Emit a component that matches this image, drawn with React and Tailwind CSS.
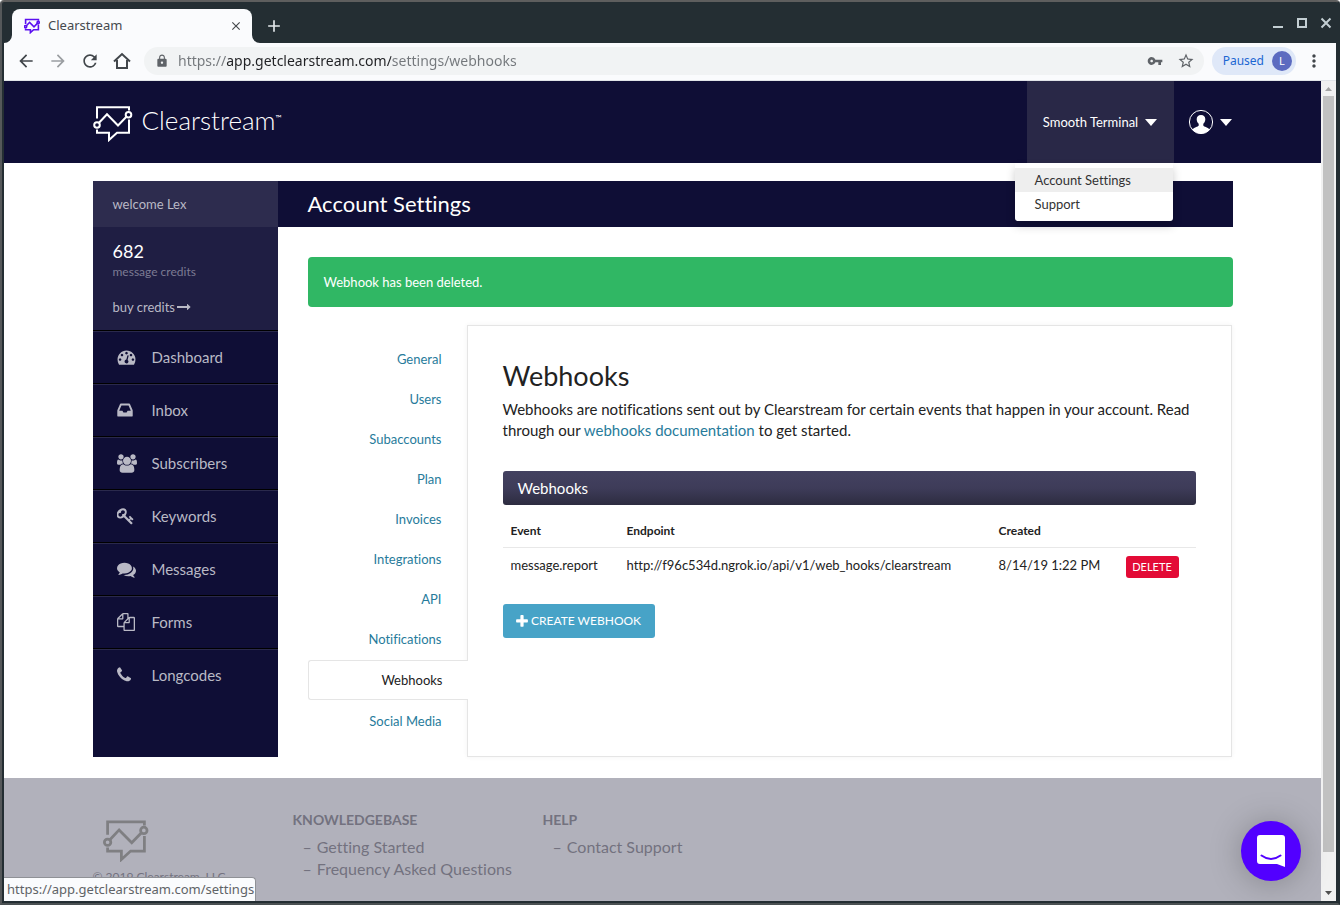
import React from "react";
import {
  MdArrowBack,
  MdArrowForward,
  MdRefresh,
  MdLock,
  MdVpnKey,
  MdStarBorder,
  MdMoreVert,
  MdClose,
  MdAdd,
} from "react-icons/md";

const ICONS = {
  dashboard: {
    box: "0 0 1792 1792",
    d: "M384 1152q0-53-37.5-90.5t-90.5-37.5-90.5 37.5-37.5 90.5 37.5 90.5 90.5 37.5 90.5-37.5 37.5-90.5zm192-448q0-53-37.5-90.5t-90.5-37.5-90.5 37.5-37.5 90.5 37.5 90.5 90.5 37.5 90.5-37.5 37.5-90.5zm428 481l101-382q6-26-7.5-48.5t-38.5-29.5-48 6.5-30 39.5l-101 382q-60 5-107 43.5t-63 98.5q-20 77 20 146t117 89 146-20 89-117q16-60-6-117t-72-91zm660-33q0-53-37.5-90.5t-90.5-37.5-90.5 37.5-37.5 90.5 37.5 90.5 90.5 37.5 90.5-37.5 37.5-90.5zm-640-640q0-53-37.5-90.5t-90.5-37.5-90.5 37.5-37.5 90.5 37.5 90.5 90.5 37.5 90.5-37.5 37.5-90.5zm448 192q0-53-37.5-90.5t-90.5-37.5-90.5 37.5-37.5 90.5 37.5 90.5 90.5 37.5 90.5-37.5 37.5-90.5zm320 448q0 261-141 483-19 29-54 29h-1402q-35 0-54-29-141-221-141-483 0-182 71-348t191-286 286-191 348-71 348 71 286 191 191 286 71 348z",
  },
  inbox: {
    box: "128 0 1536 1792",
    d: "M1151 960h316q-1-3-2.5-8.5t-2.5-7.5l-212-496h-708l-212 496q-1 3-2.5 8.5t-2.5 7.5h316l95 192h320zm513 30v482q0 26-19 45t-45 19h-1408q-26 0-45-19t-19-45v-482q0-62 25-123l238-552q10-25 36.5-42t52.5-17h832q26 0 52.5 17t36.5 42l238 552q25 61 25 123z",
  },
  users: {
    box: "0 0 1920 1792",
    d: "M593 896q-162 5-265 128h-134q-82 0-138-40.5t-56-118.5q0-353 124-353 6 0 43.5 21t97.5 42.5 119 21.5q67 0 133-23-5 37-5 66 0 139 81 256zm1071 637q0 120-73 189.5t-194 69.5h-874q-121 0-194-69.5t-73-189.5q0-53 3.5-103.5t14-109 26.5-108.5 43-97.5 62-81 85.5-53.5 111.5-20q10 0 43 21.5t73 48 107 48 135 21.5 135-21.5 107-48 73-48 43-21.5q61 0 111.5 20t85.5 53.5 62 81 43 97.5 26.5 108.5 14 109 3.5 103.5zm-1024-1277q0 106-75 181t-181 75-181-75-75-181 75-181 181-75 181 75 75 181zm704 384q0 159-112.5 271.5t-271.5 112.5-271.5-112.5-112.5-271.5 112.5-271.5 271.5-112.5 271.5 112.5 112.5 271.5zm576 225q0 78-56 118.5t-138 40.5h-134q-103-123-265-128 81-117 81-256 0-29-5-66 66 23 133 23 59 0 119-21.5t97.5-42.5 43.5-21q124 0 124 353zm-128-609q0 106-75 181t-181 75-181-75-75-181 75-181 181-75 181 75 75 181z",
  },
  key: {
    box: "64 0 1664 1792",
    d: "M832 512q0-80-56-136t-136-56-136 56-56 136q0 42 19 83-41-19-83-19-80 0-136 56t-56 136 56 136 136 56 136-56 56-136q0-42-19-83 41 19 83 19 80 0 136-56t56-136zm851 704q0 17-49 66t-66 49q-9 0-28.5-16t-36.5-33-38.5-40-24.5-26l-96 96 220 220q28 28 28 68 0 42-39 81t-81 39q-40 0-68-28l-671-671q-176 131-365 131-163 0-265.5-102.5t-102.5-265.5q0-160 95-313t248-248 313-95q163 0 265.5 102.5t102.5 265.5q0 189-131 365l355 355 96-96q-3-3-26-24.5t-40-38.5-33-36.5-16-28.5q0-17 49-66t66-49q13 0 23 10 6 6 46 44.5t82 79.5 86.5 86 73 78 28.5 41z",
  },
  comments: {
    box: "0 0 1792 1792",
    d: "M1408 768q0 139-94 257t-256.5 186.5-353.5 68.5q-86 0-176-16-124 88-278 128-36 9-86 16h-3q-11 0-20.5-8t-11.5-21q-1-3-1-6.5t.5-6.5 2-6l2.5-5 3.5-5.5 4-5 4.5-5 4-4.5q5-6 23-25t26-29.5 22.5-29 25-38.5 20.5-44q-124-72-195-177t-71-224q0-139 94-257t256.5-186.5 353.5-68.5 353.5 68.5 256.5 186.5 94 257zm384 256q0 120-71 224.5t-195 176.5q10 24 20.5 44t25 38.5 22.5 29 26 29.5 23 25q1 1 4 4.5t4.5 5 4 5 3.5 5.5l2.5 5 2 6 .5 6.5-1 6.5q-3 14-13 22t-22 7q-50-7-86-16-154-40-278-128-90 16-176 16-271 0-472-132 58 4 88 4 161 0 309-45t264-129q125-92 192-212t67-254q0-77-23-152 129 71 204 178t75 230z",
  },
  files: {
    box: "0 0 1792 1792",
    d: "M1696 384q40 0 68 28t28 68v1216q0 40-28 68t-68 28h-960q-40 0-68-28t-28-68v-288h-544q-40 0-68-28t-28-68v-672q0-40 20-88t48-76l408-408q28-28 76-48t88-20h416q40 0 68 28t28 68v328q68-40 128-40h416zm-544 213l-299 299h299v-299zm-640-384l-299 299h299v-299zm196 647l316-316v-416h-384v416q0 40-28 68t-68 28h-416v640h512v-256q0-40 20-88t48-76zm956 804v-1152h-384v416q0 40-28 68t-68 28h-416v640h896z",
  },
  phone: {
    box: "192 0 1408 1792",
    d: "M1600 1240q0 27-10 70.5t-21 68.5q-21 50-122 106-94 51-186 51-27 0-53-3.5t-57.5-12.5-47-14.5-55.5-20.5-49-18q-98-35-175-83-127-79-264-216t-216-264q-48-77-83-175-3-9-18-49t-20.5-55.5-14.5-47-12.5-57.5-3.5-53q0-92 51-186 56-101 106-122 25-11 68.5-21t70.5-10q14 0 21 3 18 6 53 76 11 19 30 54t35 63.5 31 53.5q3 4 17.5 25t21.5 35.5 7 28.5q0 20-28.5 50t-62 55-62 53-28.5 46q0 9 5 22.5t8.5 20.5 14 24 11.5 19q76 137 174 235t235 174q2 1 19 11.5t24 14 20.5 8.5 22.5 5q18 0 46-28.5t53-62 55-62 50-28.5q14 0 28.5 7t35.5 21.5 25 17.5q25 15 53.5 31t63.5 35 54 30q70 35 76 53 3 7 3 21z",
  },
  plus: {
    box: "192 0 1408 1792",
    d: "M1600 736v192q0 40-28 68t-68 28h-416v416q0 40-28 68t-68 28h-192q-40 0-68-28t-28-68v-416h-416q-40 0-68-28t-28-68v-192q0-40 28-68t68-28h416v-416q0-40 28-68t68-28h192q40 0 68 28t28 68v416h416q40 0 68 28t28 68z",
  },
  arrow: {
    box: "0 0 1792 1792",
    d: "M1728 893q0 14-10 24l-384 354q-16 14-35 6-19-9-19-29v-224h-1248q-14 0-23-9t-9-23v-192q0-14 9-23t23-9h1248v-224q0-21 19-29t35 5l384 350q10 10 10 23z",
  },
};

function Icon({ name, className }) {
  return (
    <svg viewBox={ICONS[name].box} className={className} fill="currentColor" aria-hidden="true">
      <path d={ICONS[name].d} />
    </svg>
  );
}

function Mark({ className, weight = 2 }) {
  return (
    <svg viewBox="0 0 40 37" className={className} fill="none" stroke="currentColor" strokeWidth={weight} aria-hidden="true">
      <path d="M4 13.5V2.2H36V5.5M36 14.5V27.7H24L16 35V27.7H4V24.5" />
      <path d="M6 17.8L14 9.3L25 20.5L33.4 11.8" />
      <circle cx="4" cy="20" r="2.8" />
      <circle cx="35.5" cy="9.7" r="2.8" />
    </svg>
  );
}

function Caret() {
  return (
    <svg viewBox="0 0 12 7" className="h-[7px] w-3" fill="#fff" aria-hidden="true">
      <path d="M0 0H12L6 7Z" />
    </svg>
  );
}

const NAV = [
  ["dashboard", "Dashboard", "h-[18px] w-[19px]"],
  ["inbox", "Inbox", "h-[18px] w-4"],
  ["users", "Subscribers", "h-[19px] w-5"],
  ["key", "Keywords", "h-[18px] w-[17px]"],
  ["comments", "Messages", "h-[19px] w-[19px]"],
  ["files", "Forms", "h-[18px] w-[18px]"],
  ["phone", "Longcodes", "h-[18px] w-[14px]"],
];

const TABS = [
  "General",
  "Users",
  "Subaccounts",
  "Plan",
  "Invoices",
  "Integrations",
  "API",
  "Notifications",
  "Webhooks",
  "Social Media",
];

function TitleBar() {
  return (
    <div className="flex h-[41px] shrink-0 items-end justify-between pl-[10px]">
      <div className="flex items-center">
        <div className="relative flex h-[34px] w-60 items-center rounded-t-lg bg-[#fafbfd] pr-[9px] pl-3">
          <svg viewBox="0 0 8 8" className="absolute bottom-0 -left-2 size-2" fill="#fafbfd" aria-hidden="true">
            <path d="M8 0V8H0A8 8 0 0 0 8 0Z" />
          </svg>
          <svg viewBox="0 0 8 8" className="absolute -right-2 bottom-0 size-2" fill="#fafbfd" aria-hidden="true">
            <path d="M0 0V8H8A8 8 0 0 1 0 0Z" />
          </svg>
          <Mark className="h-4 w-4 text-[#5b10f0]" weight={4} />
          <span className="ml-2 flex-1 text-[13px] text-[#45494d]">Clearstream</span>
          <button aria-label="Close tab" className="text-[#45494d]">
            <MdClose className="size-[14px]" />
          </button>
        </div>
        <button aria-label="New tab" className="ml-3 text-[#e4e9ec]">
          <MdAdd className="size-5" />
        </button>
      </div>
      <div className="flex h-[41px] items-center gap-3 pr-[6px] text-[#c3ced3]">
        <button aria-label="Minimize">
          <svg viewBox="0 0 12 12" className="size-3" aria-hidden="true">
            <path d="M1 10H11" stroke="currentColor" strokeWidth="2" />
          </svg>
        </button>
        <button aria-label="Maximize">
          <svg viewBox="0 0 12 12" className="size-3" aria-hidden="true">
            <rect x="2" y="2" width="8" height="8" fill="none" stroke="currentColor" strokeWidth="2" />
          </svg>
        </button>
        <button aria-label="Close window">
          <svg viewBox="0 0 12 12" className="size-3" aria-hidden="true">
            <path d="M1.5 1.5L10.5 10.5M10.5 1.5L1.5 10.5" stroke="currentColor" strokeWidth="2" />
          </svg>
        </button>
      </div>
    </div>
  );
}

function Toolbar() {
  return (
    <div className="flex h-[38px] shrink-0 items-center border-b border-[#e1e4e8] bg-[#fafbfd] px-3 pb-px text-[#41464b]">
      <div className="flex gap-3">
        <button aria-label="Back"><MdArrowBack className="size-5" /></button>
        <button aria-label="Forward" className="text-[#9b9ea2]"><MdArrowForward className="size-5" /></button>
        <button aria-label="Reload"><MdRefresh className="size-5" /></button>
        <button aria-label="Home">
          <svg viewBox="0 0 20 20" className="size-5" fill="none" stroke="currentColor" strokeWidth="2" aria-hidden="true">
            <path d="M2 10.5L10 3L18 10.5M5 9V17H15V9" />
          </svg>
        </button>
      </div>
      <div className="ml-3 flex h-7 flex-1 items-center rounded-full bg-[#f1f3f4] pr-[9px] pl-[11px] text-[#5f6368]">
        <MdLock className="size-[14px] shrink-0" />
        <input
          aria-label="Address"
          readOnly
          value="https://app.getclearstream.com/settings/webhooks"
          className="ml-[9px] min-w-0 flex-1 bg-[linear-gradient(90deg,#73777b_48px,#202124_48px,#202124_213px,#73777b_213px)] bg-clip-text text-sm text-transparent outline-none"
        />
        <button aria-label="Saved passwords" className="mr-[14px]"><MdVpnKey className="size-4" /></button>
        <button aria-label="Bookmark"><MdStarBorder className="size-[18px]" /></button>
      </div>
      <button className="ml-2 flex h-7 items-center gap-2 rounded-full bg-[#dfe8f8] pr-1 pl-[11px] text-[12px] text-[#1b66d2]">
        Paused
        <span className="flex size-5 items-center justify-center rounded-full bg-[#5c6bc0] text-[11px] text-white">L</span>
      </button>
      <button aria-label="Menu" className="ml-2"><MdMoreVert className="size-5" /></button>
    </div>
  );
}

function Header() {
  return (
    <header className="bg-[#0f0e36]">
      <div className="mx-auto flex h-[82px] max-w-[1140px] items-center justify-between">
        <a href="#home" className="flex items-center text-white">
          <Mark className="mt-[2px] h-[37px] w-10" />
          <span className="mb-1 ml-[9px] text-[26px] leading-8 font-light">Clearstream</span>
          <span className="mb-2 text-[8px]">™</span>
        </a>
        <div className="flex h-full">
          <div className="relative">
            <button className="flex h-full w-[147px] items-center justify-center gap-[7px] bg-[#292847] pt-px text-[13px] text-white">
              Smooth Terminal <Caret />
            </button>
            <div className="absolute top-full right-px z-10 w-[158px] rounded-b-[3px] bg-white pt-[5px] pb-[5px] text-[13px] leading-6 text-[#333] shadow-[0_5px_10px_rgba(0,0,0,0.2)]">
              <a href="#settings" className="block bg-[#eee] px-5">Account Settings</a>
              <a href="#support" className="block px-5">Support</a>
            </div>
          </div>
          <button aria-label="Profile" className="mr-px flex items-center gap-[6px] pl-[14px]">
            <svg viewBox="0 0 26 26" className="size-[26px]" aria-hidden="true">
              <clipPath id="face"><circle cx="13" cy="13" r="11.5" /></clipPath>
              <circle cx="13" cy="13" r="11.6" fill="none" stroke="#fff" strokeWidth="1" />
              <path
                clipPath="url(#face)"
                fill="#fff"
                d="M13 6c-3 0-4.500 2-4.300 4.600.1 1.800.9 3.300 2 4.200v1.800c-.5 1.300-5 2-7 4.400V26h18.600v-5c-2-2.400-6.500-3.100-7-4.400v-1.800c1.100-.9 1.900-2.400 2-4.200.2-2.600-1.300-4.600-4.300-4.600z"
              />
            </svg>
            <Caret />
          </button>
        </div>
      </div>
    </header>
  );
}

function Sidebar() {
  return (
    <aside className="flex w-[185px] shrink-0 flex-col bg-[#0f0e36] text-[#b9b9c5]">
      <div className="flex h-[46px] items-center bg-[#2d2c4e] px-5 pt-px text-[13px]">welcome Lex</div>
      <div className="h-[103px] bg-[#1f1e43] px-5 pt-3">
        <div className="text-[18px] leading-6 text-white">682</div>
        <div className="text-[12px] leading-[18px] text-[#7c7b93]">message credits</div>
        <a href="#buy" className="mt-[17px] flex items-center gap-[2px] text-[13px] leading-[18px]">
          buy credits <Icon name="arrow" className="size-[14px]" />
        </a>
      </div>
      <nav>
        {NAV.map(([icon, label, size]) => (
          <a
            key={label}
            href={"#" + icon}
            className="flex h-[53px] items-center border-t border-black pl-6 text-[15px] shadow-[inset_0_1px_0_#2a294c]"
          >
            <span className="flex w-[35px]"><Icon name={icon} className={size} /></span>
            {label}
          </a>
        ))}
      </nav>
    </aside>
  );
}

function Main() {
  return (
    <main className="flex min-w-0 flex-1 flex-col">
      <h1 className="flex h-[46px] items-center bg-[#0f0e36] pb-px pl-[30px] text-[22px] leading-[30px] text-white">Account Settings</h1>
      <div className="mt-[30px] ml-[30px] flex h-[50px] items-center rounded bg-[#30b764] px-4 pt-px text-[13px] text-white">
        Webhook has been deleted.
      </div>
      <div className="mt-[18px] ml-[30px] flex flex-1">
        <nav className="z-[1] -mr-px flex w-40 flex-col pt-[14px] text-right text-[13px] leading-[38px] text-[#277b9b]">
          {TABS.map((tab) =>
            tab === "Webhooks" ? (
              <a
                key={tab}
                href="#webhooks"
                className="my-px h-10 rounded-l-[3px] border border-r-0 border-[#e5e5e5] bg-white pr-[25px] text-[#222]"
              >
                {tab}
              </a>
            ) : (
              <a key={tab} href={"#" + tab} className="h-10 py-px pr-[26px]">
                {tab}
              </a>
            )
          )}
        </nav>
        <section className="mr-px min-h-[432px] flex-1 border border-[#e5e5e5] bg-white px-[35px] pt-8 text-[#222] shadow-[0_0_5px_rgba(0,0,0,0.05)]">
          <h2 className="text-[27px] leading-9">Webhooks</h2>
          <p className="mt-[5px] text-[15px] leading-[21px]">
            Webhooks are notifications sent out by Clearstream for certain events that happen in your account. Read
            through our <a href="#docs" className="text-[#277b9b]">webhooks documentation</a> to get started.
          </p>
          <h3 className="mt-[30px] flex h-[34px] items-center rounded-[3px] bg-linear-to-b from-[#434160] via-[#3e3c59] to-[#2d2c40] px-[15px] text-[15px] text-white">
            Webhooks
          </h3>
          <table className="mt-[10px] w-full table-fixed text-left text-[13px] leading-[18px]">
            <thead className="text-[12px] leading-4">
              <tr>
                <th className="w-[116px] p-2">Event</th>
                <th className="p-2">Endpoint</th>
                <th className="w-[127px] p-2">Created</th>
                <th className="w-[78px] p-2" aria-label="Actions"></th>
              </tr>
            </thead>
            <tbody>
              <tr className="border-t border-[#e8e8e8] align-top">
                <td className="p-2">message.report</td>
                <td className="p-2">http://f96c534d.ngrok.io/api/v1/web_hooks/clearstream</td>
                <td className="p-2">8/14/19 1:22 PM</td>
                <td className="p-2">
                  <button className="block h-[22px] w-[53px] rounded-[3px] bg-[#e30b36] text-[11px] text-white">DELETE</button>
                </td>
              </tr>
            </tbody>
          </table>
          <button className="mt-[18px] flex h-[34px] w-[152px] items-center justify-center gap-[3px] rounded-[3px] bg-[#47a3c7] text-[12px] text-white">
            <Icon name="plus" className="h-[15px] w-3" /> CREATE WEBHOOK
          </button>
        </section>
      </div>
    </main>
  );
}

function Footer() {
  return (
    <footer className="mt-[21px] flex-1 bg-[#b1b1bb] text-[#73727f]">
      <div className="mx-auto flex max-w-[1140px] pt-8">
        <div className="w-[200px]">
          <Mark className="mt-[9px] ml-[10px] h-[43px] w-[46px] text-[#7f7f82]" weight={2.4} />
          <p className="mt-[6px] text-[12px] leading-[18px]">© 2019 Clearstream, LLC</p>
        </div>
        <div className="w-[250px]">
          <h4 className="text-sm font-bold">KNOWLEDGEBASE</h4>
          <ul className="mt-[6px] pl-[10px] text-base leading-[22px]">
            <li className="flex gap-[5px]"><span>–</span><a href="#start">Getting Started</a></li>
            <li className="flex gap-[5px]"><span>–</span><a href="#faq">Frequency Asked Questions</a></li>
          </ul>
        </div>
        <div className="w-[250px]">
          <h4 className="text-sm font-bold">HELP</h4>
          <ul className="mt-[6px] pl-[10px] text-base leading-[22px]">
            <li className="flex gap-[5px]"><span>–</span><a href="#contact">Contact Support</a></li>
          </ul>
        </div>
      </div>
    </footer>
  );
}

function Scrollbar() {
  return (
    <div className="flex w-[15px] shrink-0 flex-col items-center bg-[#f1f1f1]" aria-hidden="true">
      <svg viewBox="0 0 15 15" className="size-[15px] shrink-0" fill="#a3a3a3"><path d="M4 10L7.500 6L11 10Z" /></svg>
      <div className="mb-[34px] w-[11px] flex-1 bg-[#c1c1c1]" />
      <svg viewBox="0 0 15 15" className="size-[15px] shrink-0" fill="#505050"><path d="M4 5L7.500 9L11 5Z" /></svg>
    </div>
  );
}

export default function App() {
  return (
    <div className="h-screen bg-white">
      <div className="flex h-full flex-col overflow-hidden rounded-t-[4px] border-2 border-t-[#5e5e5e] border-r-[#242e33] border-b-[#4a5052] border-l-[#55585a] bg-[#242e33] font-['Noto_Sans',sans-serif]">
        <TitleBar />
        <div className="mr-[2px] mb-[2px] ml-[2px] flex min-h-0 flex-1 flex-col">
          <Toolbar />
          <div className="relative flex min-h-0 flex-1">
            <div className="flex min-w-0 flex-1 flex-col overflow-hidden bg-white font-[Lato,sans-serif] [font-variant-ligatures:none]">
              <Header />
              <div className="mx-auto mt-[18px] flex w-full max-w-[1140px]">
                <Sidebar />
                <Main />
              </div>
              <Footer />
            </div>
            <Scrollbar />
            <button
              aria-label="Open chat"
              className="absolute right-[35px] bottom-5 flex size-[60px] items-center justify-center rounded-full bg-[#5200ff] shadow-[0_2px_32px_rgba(0,0,0,0.25)]"
            >
              <svg viewBox="0 0 28 32" className="h-8 w-7" aria-hidden="true">
                <path d="M3 0H25Q28 0 28 3V32L20 29H3Q0 29 0 26V3Q0 0 3 0Z" fill="#fff" />
                <path d="M4.500 20.500Q14 27.500 23.500 20.500" fill="none" stroke="#5200ff" strokeWidth="2" strokeLinecap="round" />
              </svg>
            </button>
            <div className="absolute bottom-0 left-0 h-6 rounded-tr border-t border-r border-[#8f9196] bg-[#fafbfd] pr-px pl-[3px] text-[13px] leading-[22px] text-[#5f6367]">
              https://app.getclearstream.com/settings
            </div>
          </div>
        </div>
      </div>
    </div>
  );
}
